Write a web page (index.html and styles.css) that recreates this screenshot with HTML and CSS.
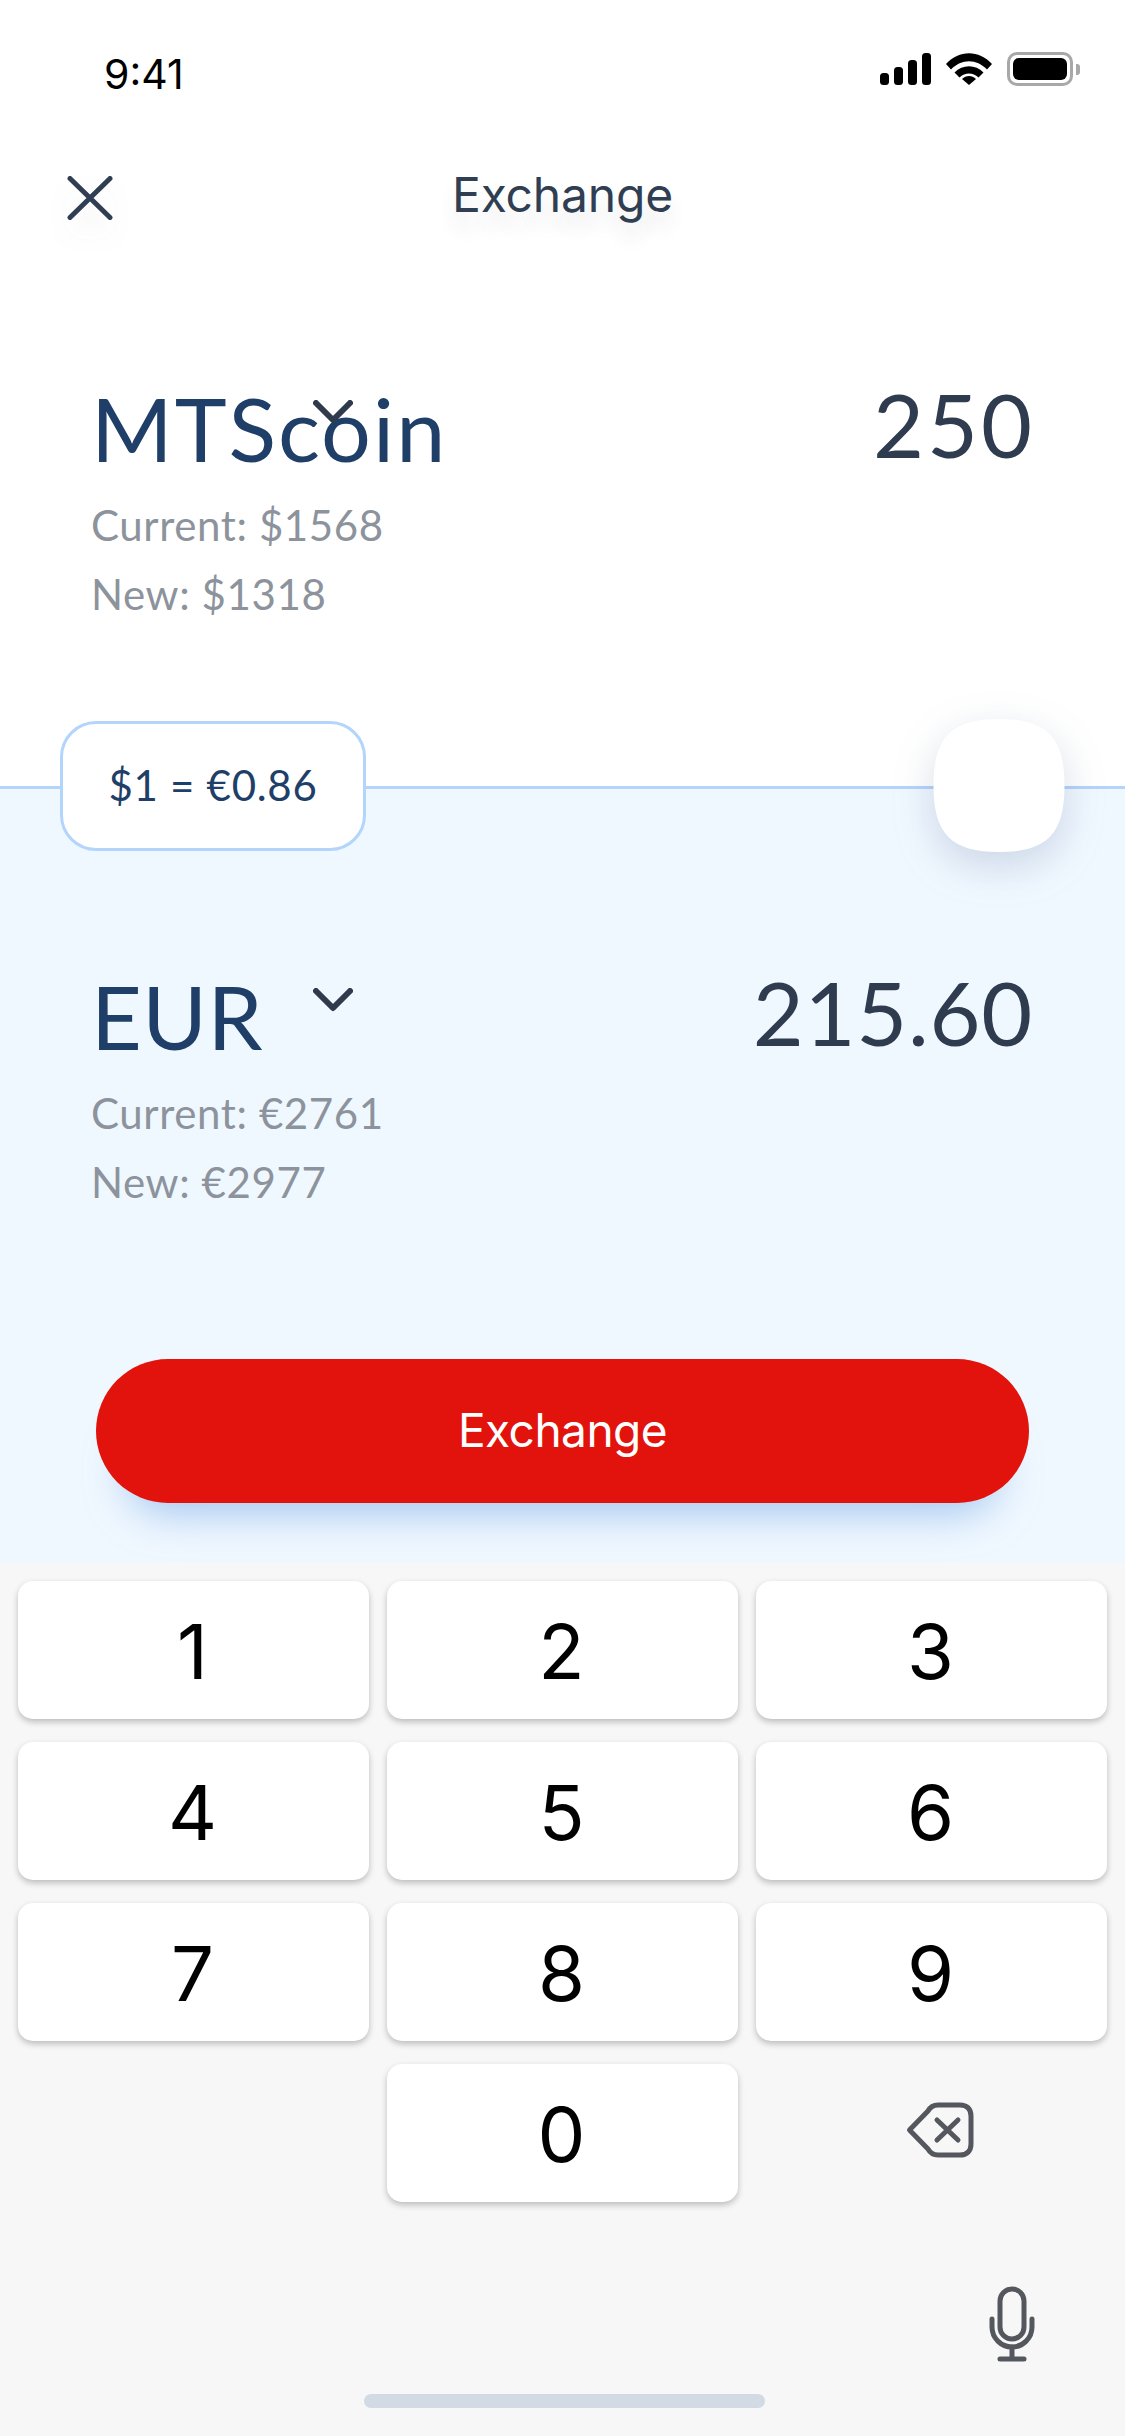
FILE: index.html
```html
<!DOCTYPE html>
<html lang="en">
  <head>
    <meta charset="UTF-8" />
    <meta name="viewport" content="width=device-width, initial-scale=1.0" />
    <title>Exchange</title>
    <link rel="stylesheet" href="styles.css">
  </head>
  <body>
    <div class="screen">
      <div class="top-section">
        <div class="status-bar">
          <span class="clock">9:41</span>
          <div class="status-icons">
            <svg class="signal" width="51" height="32" viewBox="0 0 51 32" fill="#000">
              <rect x="0" y="20" width="9" height="12" rx="3.5" />
              <rect x="14" y="14" width="9" height="18" rx="3.5" />
              <rect x="28" y="7" width="9" height="25" rx="3.5" />
              <rect x="42" y="0" width="9" height="32" rx="3.5" />
            </svg>
            <svg class="wifi" width="46" height="32" viewBox="0 0 46 32" fill="#000">
              <path d="M0 11 C13 -3.5 33 -3.5 46 11 L41 16.5 C30.500 5.500 15.500 5.500 5 16.500 Z" />
              <path d="M8.500 19.500 C16.500 11 29.500 11 37.500 19.500 L32.500 24.500 C27 19 19 19 13.500 24.500 Z" />
              <path d="M16 26 C20 22 26 22 30 26 L23 32 Z" />
            </svg>
            <div class="battery">
              <div class="battery-level"></div>
            </div>
          </div>
        </div>

        <div class="nav-bar">
          <svg class="close-icon" width="46" height="44" viewBox="0 0 46 44" fill="none" stroke="#2f3e52" stroke-width="5" stroke-linecap="round">
            <path d="M3 2.500 L43 41.500 M43 2.500 L3 41.500" />
          </svg>
          <h1 class="nav-title">Exchange</h1>
        </div>

        <div class="currency-row from-row">
          <div class="currency-info">
            <div class="currency-name">MTScoin</div>
            <div class="balance">Current: $1568</div>
            <div class="balance">New: $1318</div>
          </div>
          <div class="amount">250</div>
          <svg class="chevron" width="40" height="24" viewBox="0 0 40 24" fill="none" stroke="#2f3b4c" stroke-width="6" stroke-linecap="round" stroke-linejoin="round">
            <path d="M3 3 L20 20 L37 3" />
          </svg>
        </div>
      </div>

      <div class="bottom-section">
        <div class="divider-items">
          <div class="rate-pill">$1 = €0.86</div>
          <svg class="swap-button" width="132" height="133" viewBox="0 0 132 134">
            <path d="M66 0 C114 0 132 18 132 67 C132 116 114 134 66 134 C18 134 0 116 0 67 C0 18 18 0 66 0 Z" fill="#fff" />
          </svg>
        </div>

        <div class="currency-row to-row">
          <div class="currency-info">
            <div class="currency-name">EUR</div>
            <div class="balance">Current: €2761</div>
            <div class="balance">New: €2977</div>
          </div>
          <div class="amount">215.60</div>
          <svg class="chevron" width="40" height="24" viewBox="0 0 40 24" fill="none" stroke="#2f3b4c" stroke-width="6" stroke-linecap="round" stroke-linejoin="round">
            <path d="M3 3 L20 20 L37 3" />
          </svg>
        </div>

        <button class="exchange-btn" type="button">Exchange</button>
      </div>

      <div class="keyboard">
        <div class="keys">
          <button class="key" type="button">1</button>
          <button class="key" type="button">2</button>
          <button class="key" type="button">3</button>
          <button class="key" type="button">4</button>
          <button class="key" type="button">5</button>
          <button class="key" type="button">6</button>
          <button class="key" type="button">7</button>
          <button class="key" type="button">8</button>
          <button class="key" type="button">9</button>
          <div class="key-blank"></div>
          <button class="key" type="button">0</button>
          <div class="key-blank backspace">
            <svg width="68" height="56" viewBox="0 0 68 56" fill="none" stroke="#54585e" stroke-width="5" stroke-linecap="round" stroke-linejoin="round">
              <path d="M3.500 28 L22 9 C24.500 4.500 27 3 32 3 L54 3 C61 3 65 7 65 14 L65 42 C65 49 61 53 54 53 L32 53 C27 53 24.500 51.500 22 47 Z" />
              <path d="M31 18 L52 38 M52 18 L31 38" />
            </svg>
          </div>
        </div>

        <div class="mic-row">
          <svg width="46" height="76" viewBox="0 0 46 76" fill="none" stroke="#54585e" stroke-width="5" stroke-linecap="round">
            <rect x="11" y="3" width="24" height="50" rx="12" />
            <path d="M3 33 L3 41 C3 52 12 61 23 61 C34 61 43 52 43 41 L43 33" stroke-width="5" />
            <path d="M23 61 L23 72.500 M11 73 L35 73" />
          </svg>
        </div>

        <div class="home-indicator"></div>
      </div>
    </div>
  </body>
</html>
```

FILE: styles.css
```css
* {
  box-sizing: border-box;
}
html, body {
  margin: 0;
  padding: 0;
  background-color: #fff;
}
.screen {
  width: 1125px;
  height: 2436px;
  overflow: hidden;
  display: flex;
  flex-direction: column;
  font-family: Lato, "Open Sans", sans-serif;
}

/* top half */
.top-section {
  height: 786px;
  background-color: #fff;
}
.status-bar {
  height: 100px;
  padding: 52px 52px 0 104px;
  display: flex;
  justify-content: space-between;
}
.clock {
  font-family: Inter, "Liberation Sans", sans-serif;
  font-size: 41px;
  line-height: 44px;
  color: #000;
}
.status-icons {
  display: flex;
  align-items: flex-start;
  height: 34px;
}
.signal {
  margin: 1px 15px 0 0;
}
.wifi {
  margin: 1px 15px 0 0;
}
.battery {
  width: 66px;
  height: 34px;
  border: 3px solid #a8a8a8;
  border-radius: 10px;
  padding: 3px;
  position: relative;
}
.battery::after {
  content: "";
  position: absolute;
  right: -10px;
  top: 9px;
  width: 4px;
  height: 11px;
  background-color: #a8a8a8;
  border-radius: 0 3px 3px 0;
}
.battery-level {
  width: 100%;
  height: 100%;
  background-color: #000;
  border-radius: 6px;
}
.nav-bar {
  height: 130px;
  padding-top: 66px;
  position: relative;
  text-align: center;
}
.close-icon {
  position: absolute;
  left: 67px;
  top: 76px;
  filter: drop-shadow(0 16px 14px rgba(47, 62, 82, 0.08));
}
.nav-title {
  margin: 0;
  font-family: Inter, "Liberation Sans", sans-serif;
  font-size: 48px;
  line-height: 58px;
  font-weight: 400;
  letter-spacing: -0.2px;
  color: #2f3e52;
  text-shadow: 0 16px 18px rgba(47, 62, 82, 0.1);
}

/* currency blocks */
.currency-row {
  display: flex;
  justify-content: space-between;
  align-items: flex-start;
  padding: 0 90px 0 91px;
  position: relative;
}
.from-row {
  margin-top: 145px;
}
.to-row {
  margin-top: 174px;
}
.currency-name {
  font-size: 88px;
  line-height: 106px;
  letter-spacing: 2px;
  color: #1f3f68;
  margin-bottom: 10px;
}
.to-row .currency-name {
  letter-spacing: 0.5px;
}
.balance {
  font-size: 42px;
  line-height: 69px;
  letter-spacing: 0.6px;
  color: #8c939c;
}
.amount {
  font-size: 88px;
  line-height: 106px;
  letter-spacing: 3px;
  margin-top: -4px;
  color: #2f3b4f;
}
.to-row .amount {
  letter-spacing: 0.7px;
  margin-right: 2px;
}
.chevron {
  position: absolute;
  left: 313px;
  top: 25px;
}

/* bottom half */
.bottom-section {
  height: 777px;
  background-color: #f0f8ff;
  border-top: 3px solid #b3d4fb;
  position: relative;
}
.divider-items {
  position: absolute;
  left: 60px;
  top: -70px;
  width: 1005px;
  display: flex;
  justify-content: space-between;
  align-items: center;
}
.rate-pill {
  width: 306px;
  height: 130px;
  padding-bottom: 2px;
  background-color: #fff;
  border: 3px solid #b3d4fb;
  border-radius: 36px;
  display: flex;
  align-items: center;
  justify-content: center;
  font-size: 42px;
  letter-spacing: 0.7px;
  color: #1f3f68;
}
.swap-button {
  filter: drop-shadow(0 14px 20px rgba(60, 80, 130, 0.2));
}
.exchange-btn {
  display: block;
  width: 933px;
  height: 144px;
  margin: 142px 0 0 96px;
  padding: 0 0 2px;
  background-color: #e2130c;
  color: #fff;
  border: none;
  border-radius: 72px;
  font-family: Inter, "Liberation Sans", sans-serif;
  font-size: 46px;
  letter-spacing: -0.5px;
  box-shadow: 0 40px 40px -30px rgba(90, 150, 225, 0.5);
}

/* keypad */
.keyboard {
  flex: 1;
  background-color: #f7f7f7;
  position: relative;
}
.keys {
  display: grid;
  grid-template-columns: repeat(3, 351px);
  grid-auto-rows: 138px;
  column-gap: 18px;
  row-gap: 23px;
  padding: 18px 18px 0;
}
.key {
  background-color: #fff;
  border: none;
  border-radius: 15px;
  font-family: Inter, "Liberation Sans", sans-serif;
  font-size: 76px;
  color: #000;
  padding: 2px 2px 0 0;
  box-shadow: 0 3px 6px rgba(0, 0, 0, 0.24);
}
.key-blank {
  display: flex;
  align-items: center;
  justify-content: center;
}
.backspace svg {
  margin: 0 0 6px 17px;
}
.mic-row {
  display: flex;
  justify-content: flex-end;
  padding: 84px 90px 0 0;
}
.mic-row svg {
  display: block;
}
.home-indicator {
  position: absolute;
  left: 364px;
  top: 831px;
  width: 401px;
  height: 14px;
  background-color: #d2dae4;
  border-radius: 7px;
}
```
